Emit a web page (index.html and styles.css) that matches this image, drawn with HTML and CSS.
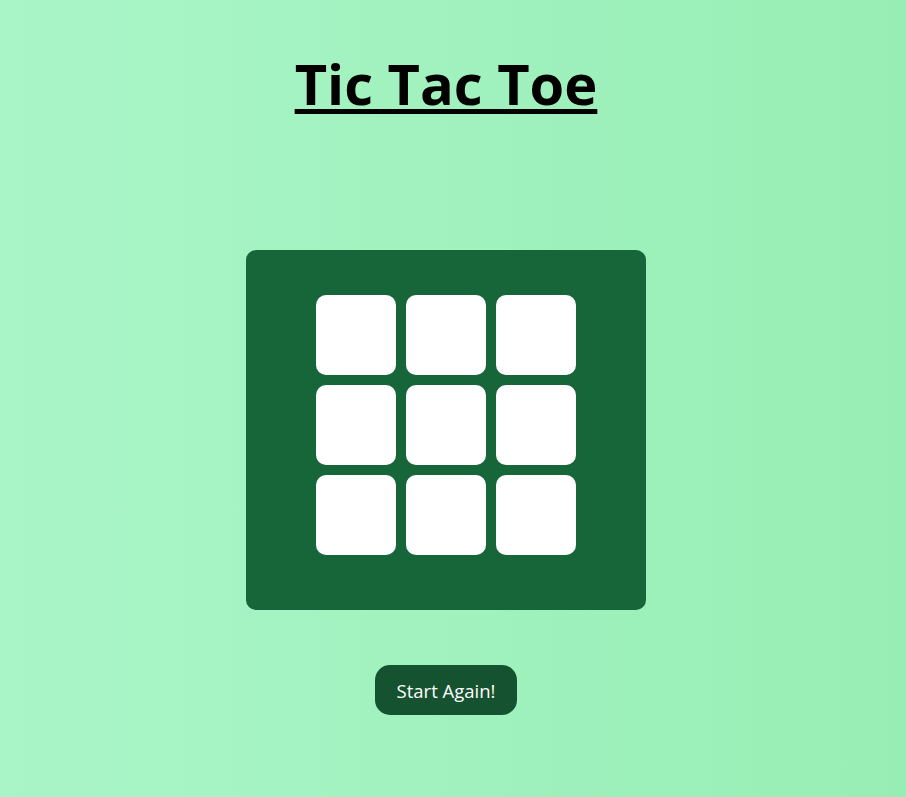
FILE: index.html
```html
<!DOCTYPE html>
<html lang="en">
<head>
<meta charset="utf-8">
<title>Tic Tac Toe</title>
<link rel="stylesheet" href="styles.css">
</head>
<body>
<main class="page">
  <h1 class="title">Tic Tac Toe</h1>
  <div class="board">
    <div class="grid">
      <button class="cell"></button>
      <button class="cell"></button>
      <button class="cell"></button>
      <button class="cell"></button>
      <button class="cell"></button>
      <button class="cell"></button>
      <button class="cell"></button>
      <button class="cell"></button>
      <button class="cell"></button>
    </div>
  </div>
  <button class="reset">Start Again!</button>
</main>
</body>
</html>
```
FILE: styles.css
```css
html, body {
  margin: 0;
  padding: 0;
  height: 100%;
}
body {
  background: linear-gradient(to right, #aaf5c8, #97eeb4);
  font-family: "Open Sans", "Noto Sans", sans-serif;
}
.page {
  display: flex;
  flex-direction: column;
  align-items: center;
  padding-top: 43px;
  padding-right: 14px;
}
.title {
  margin: 0;
  font-size: 56px;
  line-height: 80px;
  font-weight: 700;
  text-decoration: underline;
  text-decoration-thickness: 5px;
  text-underline-offset: 4px;
  color: #000;
}
.board {
  margin-top: 127px;
  width: 400px;
  height: 360px;
  box-sizing: border-box;
  padding-top: 45px;
  background: #17663a;
  border-radius: 10px;
  display: flex;
  justify-content: center;
  align-items: flex-start;
}
.grid {
  display: grid;
  grid-template-columns: repeat(3, 80px);
  grid-template-rows: repeat(3, 80px);
  gap: 10px;
}
.cell {
  border: none;
  background: #fff;
  border-radius: 10px;
  padding: 0;
}
.reset {
  margin-top: 55px;
  width: 142px;
  height: 50px;
  border: none;
  border-radius: 15px;
  background: #15522f;
  color: #fff;
  font-family: "Open Sans", "Noto Sans", sans-serif;
  font-size: 18.5px;
  padding: 0;
}
```
